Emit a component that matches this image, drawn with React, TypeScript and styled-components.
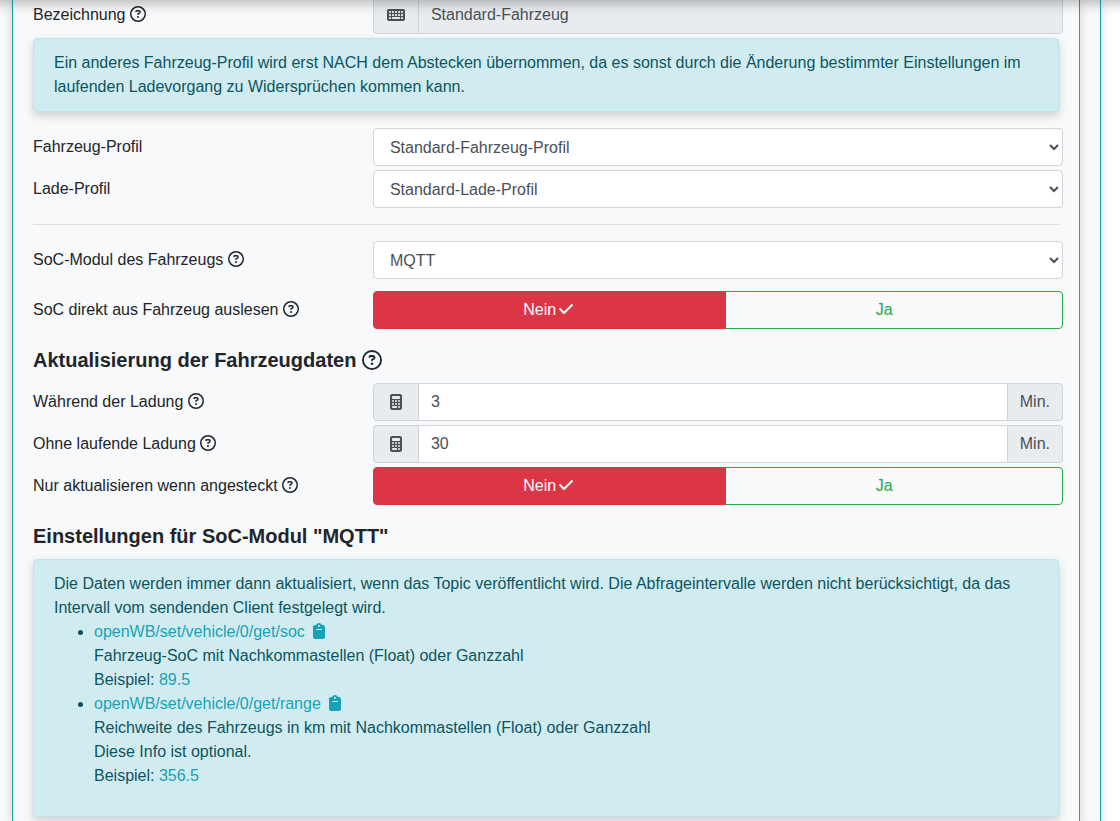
import React from "react";
import styled, { createGlobalStyle } from "styled-components";
import {
  FaRegCircleQuestion,
  FaKeyboard,
  FaCalculator,
  FaClipboard,
  FaCheck,
} from "react-icons/fa6";

const GlobalStyle = createGlobalStyle`
  *, *::before, *::after { box-sizing: border-box; }
  body {
    margin: 0;
    background: #fff;
    color: #212529;
    font-family: "Liberation Sans", Arial, sans-serif;
    font-size: 16px;
    line-height: 24px;
  }
  svg { vertical-align: -2px; }
`;

const NavEdge = styled.div`
  position: fixed;
  z-index: 10;
  top: -20px;
  left: -20px;
  right: -20px;
  height: 20px;
  box-shadow: 0 2px 14px rgba(0, 0, 0, 0.32);
`;

const OuterCard = styled.main`
  display: flex;
  min-height: 100vh;
  margin-right: 19px;
  padding: 0 20px 0 12px;
  background: #f8f9fa;
  border-right: 1px solid #17a2b8;
  box-shadow: 0 4px 10px rgba(0, 0, 0, 0.15);
  overflow: clip;
  overflow-clip-margin: 19px;
`;

const VehicleCard = styled.form`
  flex: 1;
  min-width: 0;
  padding: 0 20px 4px;
  background: #f8f9fa;
  border-left: 1px solid #17a2b8;
  border-right: 1px solid #17a2b8;
  box-shadow: 0 4px 10px rgba(0, 0, 0, 0.15);
`;

const Row = styled.div<{ $first?: boolean; $spaced?: boolean }>`
  display: grid;
  grid-template-columns: minmax(0, 33fr) minmax(0, 67fr);
  margin: ${(p) => (p.$first ? "-4px" : p.$spaced ? "12px" : "0")} -4px 4px 0;
`;

const Label = styled.label`
  padding-top: 7px;
`;

const LabelText = styled.span`
  padding-top: 7px;
`;

const Group = styled.div`
  display: flex;
  height: 38px;
`;

const Addon = styled.span<{ $end?: boolean }>`
  display: flex;
  align-items: center;
  justify-content: center;
  padding: 0 12px;
  color: #495057;
  background: #e9ecef;
  border: 1px solid #ced4da;
  border-radius: ${(p) => (p.$end ? "0 4px 4px 0" : "4px 0 0 4px")};
`;

const IconBox = styled.span<{ $hidden?: boolean }>`
  display: inline-flex;
  justify-content: center;
  width: 20px;
  vertical-align: -2px;
  visibility: ${(p) => (p.$hidden ? "hidden" : "visible")};
`;

const KeyboardIcon = styled(FaKeyboard)`
  width: 18px;
  height: 16px;
`;

const TextInput = styled.input<{ $last?: boolean }>`
  flex: 1;
  min-width: 0;
  margin: 0 ${(p) => (p.$last ? "0" : "-1px")} 0 -1px;
  padding: 6px 12px;
  font: inherit;
  color: #495057;
  background: #fff;
  border: 1px solid #ced4da;
  border-radius: ${(p) => (p.$last ? "0 4px 4px 0" : "0")};
  &:disabled { background: #e9ecef; }
`;

const Select = styled.select`
  width: 100%;
  height: 38px;
  padding: 6px 12px;
  font: inherit;
  color: #495057;
  background: #fff;
  border: 1px solid #ced4da;
  border-radius: 4px;
`;

const Choice = styled.button`
  flex: 1 1 auto;
  padding: 6px 12px;
  font: inherit;
  text-align: center;
  border: 1px solid;
`;

const NoChoice = styled(Choice)`
  z-index: 1;
  color: #fff;
  background: #dc3545;
  border-color: #dc3545;
  border-radius: 4px 0 0 4px;
`;

const YesChoice = styled(Choice)`
  margin-left: -1px;
  color: #28a745;
  background: transparent;
  border-color: #28a745;
  border-radius: 0 4px 4px 0;
`;

const Alert = styled.div<{ $last?: boolean }>`
  margin-bottom: ${(p) => (p.$last ? "0" : "16px")};
  padding: 12px 20px;
  color: #0c5460;
  background: #d1ecf1;
  border: 1px solid #bee5eb;
  border-radius: 4px;
  box-shadow: 0 4px 10px rgba(0, 0, 0, 0.17);
`;

const Divider = styled.hr`
  margin: 16px 0;
  border: 0;
  border-top: 1px solid rgba(0, 0, 0, 0.1);
`;

const Heading = styled.h2`
  margin: 18px 0 10px;
  font-size: 20px;
  line-height: 26px;
  svg { vertical-align: -3px; }
`;

const TopicList = styled.ul`
  margin: 0 0 16px;
  padding-left: 40px;
`;

const Info = styled.span`
  color: #17a2b8;
`;

const CopyButton = styled.button`
  width: 20px;
  padding: 0;
  font: inherit;
  color: #17a2b8;
  background: none;
  border: 0;
`;

const Help = () => <FaRegCircleQuestion aria-label="Hilfe" />;

function SelectRow(p: { id: string; label: string; value: string; help?: boolean }) {
  return (
    <Row>
      <Label htmlFor={p.id}>
        {p.label} {p.help && <Help />}
      </Label>
      <Select id={p.id} defaultValue={p.value}>
        <option>{p.value}</option>
      </Select>
    </Row>
  );
}

function MinutesRow(p: { id: string; label: string; value: string }) {
  return (
    <Row>
      <Label htmlFor={p.id}>
        {p.label} <Help />
      </Label>
      <Group>
        <Addon>
          <IconBox><FaCalculator /></IconBox>
        </Addon>
        <TextInput id={p.id} inputMode="numeric" defaultValue={p.value} />
        <Addon $end>Min.</Addon>
      </Group>
    </Row>
  );
}

function ToggleRow(p: { id: string; label: string; spaced?: boolean }) {
  const [on, setOn] = React.useState(false);
  return (
    <Row $spaced={p.spaced}>
      <LabelText id={p.id}>
        {p.label} <Help />
      </LabelText>
      <Group role="group" aria-labelledby={p.id}>
        <NoChoice type="button" aria-pressed={!on} onClick={() => setOn(false)}>
          Nein<IconBox $hidden={on}><FaCheck /></IconBox>
        </NoChoice>
        <YesChoice type="button" aria-pressed={on} onClick={() => setOn(true)}>
          Ja<IconBox $hidden={!on}><FaCheck /></IconBox>
        </YesChoice>
      </Group>
    </Row>
  );
}

function Topic(p: { name: string; example: string; children: React.ReactNode }) {
  return (
    <li>
      <Info>{p.name}</Info>{" "}
      <CopyButton type="button" aria-label="Kopieren"><FaClipboard /></CopyButton>
      <br />
      {p.children}
      <br />
      Beispiel: <Info>{p.example}</Info>
    </li>
  );
}

export default function App() {
  return (
    <>
      <GlobalStyle />
      <NavEdge />
      <OuterCard>
        <VehicleCard>
          <Row $first>
            <Label htmlFor="name">
              Bezeichnung <Help />
            </Label>
            <Group>
              <Addon>
                <IconBox><KeyboardIcon /></IconBox>
              </Addon>
              <TextInput id="name" $last disabled defaultValue="Standard-Fahrzeug" />
            </Group>
          </Row>
          <Alert>
            Ein anderes Fahrzeug-Profil wird erst NACH dem Abstecken übernommen, da es sonst
            durch die Änderung bestimmter Einstellungen im laufenden Ladevorgang zu
            Widersprüchen kommen kann.
          </Alert>
          <SelectRow id="vehicle-profile" label="Fahrzeug-Profil" value="Standard-Fahrzeug-Profil" />
          <SelectRow id="charge-profile" label="Lade-Profil" value="Standard-Lade-Profil" />
          <Divider />
          <SelectRow id="soc-module" label="SoC-Modul des Fahrzeugs" value="MQTT" help />
          <ToggleRow id="read-soc" label="SoC direkt aus Fahrzeug auslesen" spaced />
          <Heading>
            Aktualisierung der Fahrzeugdaten <Help />
          </Heading>
          <MinutesRow id="while-charging" label="Während der Ladung" value="3" />
          <MinutesRow id="not-charging" label="Ohne laufende Ladung" value="30" />
          <ToggleRow id="only-plugged" label="Nur aktualisieren wenn angesteckt" />
          <Heading>Einstellungen für SoC-Modul "MQTT"</Heading>
          <Alert $last>
            Die Daten werden immer dann aktualisiert, wenn das Topic veröffentlicht wird. Die
            Abfrageintervalle werden nicht berücksichtigt, da das Intervall vom sendenden
            Client festgelegt wird.
            <TopicList>
              <Topic name="openWB/set/vehicle/0/get/soc" example="89.5">
                Fahrzeug-SoC mit Nachkommastellen (Float) oder Ganzzahl
              </Topic>
              <Topic name="openWB/set/vehicle/0/get/range" example="356.5">
                Reichweite des Fahrzeugs in km mit Nachkommastellen (Float) oder Ganzzahl
                <br />
                Diese Info ist optional.
              </Topic>
            </TopicList>
          </Alert>
        </VehicleCard>
      </OuterCard>
    </>
  );
}
